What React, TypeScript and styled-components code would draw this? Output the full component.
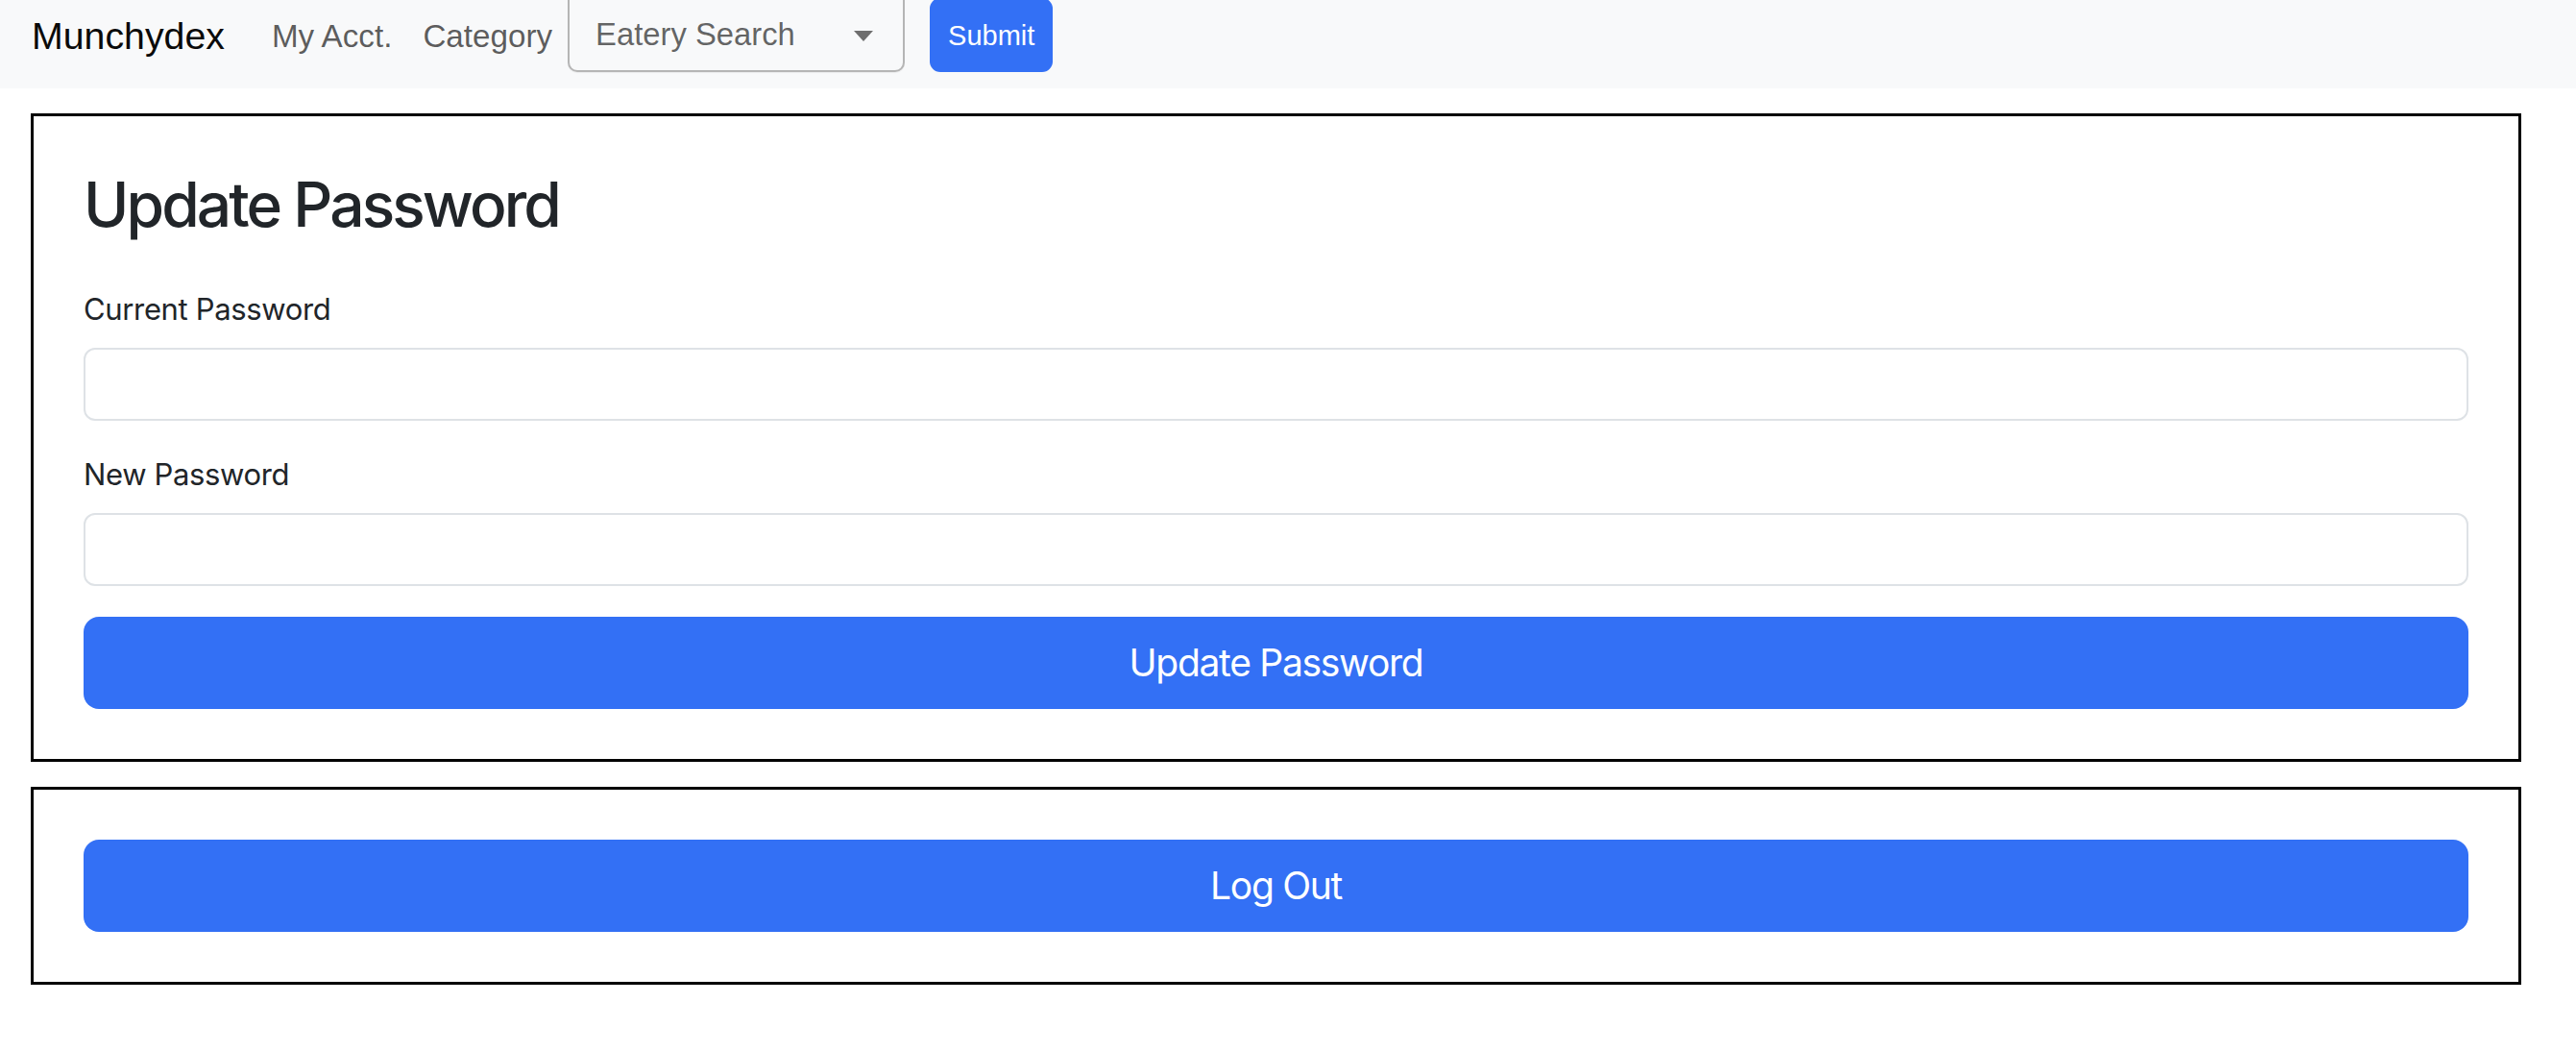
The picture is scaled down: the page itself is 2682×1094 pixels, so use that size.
import React from "react";
import styled, { createGlobalStyle } from "styled-components";

const GlobalStyle = createGlobalStyle`
  * { box-sizing: border-box; }
  html, body { margin: 0; padding: 0; background: #ffffff; }
  body {
    font-family: Inter, "Noto Sans", "Liberation Sans", sans-serif;
    color: #212529;
    overflow: hidden;
  }
`;

const NavBar = styled.nav`
  height: 92px;
  background: #f8f9fa;
  display: flex;
  align-items: center;
  padding: 0 32px 17px 33px;
  font-family: "Liberation Sans", Arial, sans-serif;
  overflow: hidden;
`;

const Brand = styled.a`
  font-size: 39.3px;
  line-height: 1.5;
  color: #0a0a0a;
  text-decoration: none;
  margin-right: 33px;
  white-space: nowrap;
`;

const NavLink = styled.a`
  font-size: 33.2px;
  line-height: 1.5;
  color: rgba(0, 0, 0, 0.65);
  text-decoration: none;
  padding: 0 16px;
  white-space: nowrap;
`;

const SearchForm = styled.form`
  display: flex;
  align-items: flex-end;
  align-self: flex-end;
  gap: 26px;
  margin: 0;
`;

const SelectBox = styled.div`
  width: 351px;
  height: 100px;
  border: 2px solid #b5b5b5;
  border-radius: 10px;
  background: #f8f9fa;
  display: flex;
  align-items: flex-end;
  justify-content: space-between;
  padding: 0 31px 15px 27px;
  font-size: 32.8px;
  line-height: 44px;
  color: rgba(0, 0, 0, 0.62);
  box-shadow: 0 1px 1px rgba(0, 0, 0, 0.06);
`;

const Caret = styled.svg`
  width: 20px;
  height: 11px;
  margin-bottom: 15px;
  flex: none;
`;

const SubmitButton = styled.button`
  height: 77px;
  padding: 2px 19px 0;
  border: none;
  border-radius: 11px;
  background: #3370f5;
  color: #ffffff;
  font-family: "Liberation Sans", Arial, sans-serif;
  font-size: 29px;
  line-height: 1;
`;

const Main = styled.main`
  display: flex;
  flex-direction: column;
  gap: 26px;
  padding: 26px 57px 0 32px;
`;

const Card = styled.section`
  border: 3px solid #000000;
  padding: 52px;
  display: flex;
  flex-direction: column;
`;

const Title = styled.h2`
  margin: 2px 0 46px;
  font-size: 64px;
  font-weight: 500;
  line-height: 1.2;
  letter-spacing: -2.9px;
  color: #212529;
`;

const Field = styled.div`
  display: flex;
  flex-direction: column;
  margin-bottom: 32px;
`;

const Label = styled.label`
  font-size: 31px;
  line-height: 48px;
  letter-spacing: -0.35px;
  margin-bottom: 16px;
  color: #212529;
`;

const Input = styled.input`
  height: 76px;
  width: 100%;
  border: 2px solid #dee2e6;
  border-radius: 12px;
  padding: 12px 24px;
  font-size: 32px;
  background: #ffffff;
  outline: none;
`;

const BigButton = styled.button`
  height: 96px;
  width: 100%;
  border: none;
  border-radius: 16px;
  background: #3370f5;
  color: #ffffff;
  font-family: Inter, "Noto Sans", sans-serif;
  font-size: 39px;
  letter-spacing: -1.3px;
  line-height: 60px;
`;

export default function App() {
  return (
    <>
      <GlobalStyle />
      <NavBar>
        <Brand href="#">Munchydex</Brand>
        <NavLink href="#">My Acct.</NavLink>
        <NavLink href="#">Category</NavLink>
        <SearchForm onSubmit={(e) => e.preventDefault()}>
          <SelectBox role="combobox">
            <span>Eatery Search</span>
            <Caret viewBox="0 0 20 11">
              <path d="M0 0 L20 0 L10 11 Z" fill="#6e6e6e" />
            </Caret>
          </SelectBox>
          <SubmitButton type="submit">Submit</SubmitButton>
        </SearchForm>
      </NavBar>
      <Main>
        <Card>
          <Title>Update Password</Title>
          <Field>
            <Label htmlFor="cur">Current Password</Label>
            <Input id="cur" type="password" />
          </Field>
          <Field>
            <Label htmlFor="new">New Password</Label>
            <Input id="new" type="password" />
          </Field>
          <BigButton type="button">Update Password</BigButton>
        </Card>
        <Card>
          <BigButton type="button">Log Out</BigButton>
        </Card>
      </Main>
    </>
  );
}
